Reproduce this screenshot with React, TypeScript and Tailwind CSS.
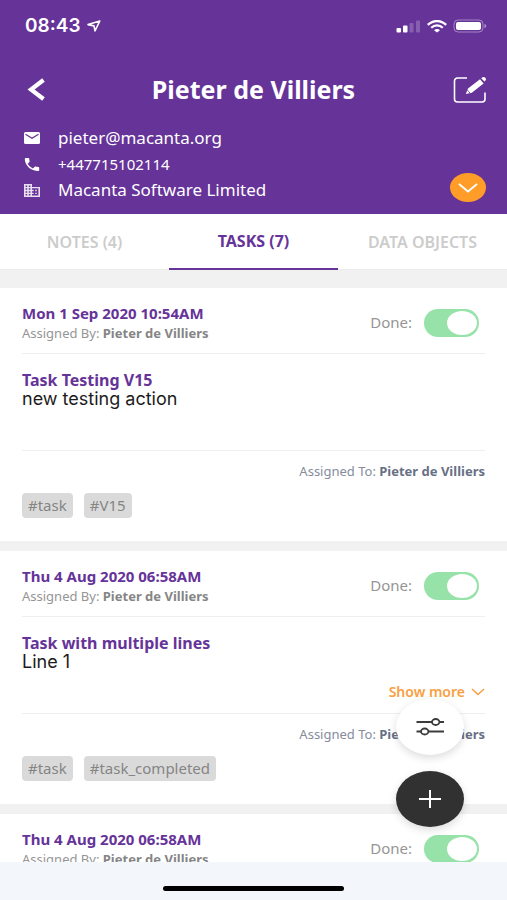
import { useState } from "react";

type Task = {
  id: number;
  date: string;
  title: string;
  body: string;
  tags: string[];
  more?: boolean;
};

const PERSON = "Pieter de Villiers";

const TASKS: Task[] = [
  { id: 1, date: "Mon 1 Sep 2020 10:54AM", title: "Task Testing V15", body: "new testing action", tags: ["#task", "#V15"] },
  { id: 2, date: "Thu 4 Aug 2020 06:58AM", title: "Task with multiple lines", body: "Line 1", tags: ["#task", "#task_completed"], more: true },
  { id: 3, date: "Thu 4 Aug 2020 06:58AM", title: "Task with multiple lines", body: "Line 1", tags: ["#task", "#task_completed"], more: true },
];

const TABS = ["NOTES (4)", "TASKS (7)", "DATA OBJECTS"];

function StatusBar() {
  return (
    <div className="flex h-13 items-center justify-between pr-5 pl-[25px]">
      <div className="flex items-center gap-1.5">
        <span className="font-['Inter',sans-serif] text-[19px] leading-6 font-semibold">08:43</span>
        <svg width="14" height="12" viewBox="0 0 14 12" fill="none" stroke="currentColor" strokeWidth="1.600" strokeLinejoin="round" aria-hidden="true">
          <path d="M12.800 1 1 4.600l6 1.300 1 5z" />
        </svg>
      </div>
      <div className="flex items-center gap-1.5">
        <svg width="25" height="14" viewBox="0 0 25 14" fill="currentColor" aria-hidden="true">
          <rect x="0.5" y="9" width="4.500" height="4.500" rx="1" />
          <rect x="7" y="6.500" width="4.500" height="7" rx="1" />
          <rect x="13.500" y="4" width="4" height="9.500" rx="1" opacity="0.22" />
          <rect x="20" y="1.500" width="4" height="12" rx="1" opacity="0.22" />
        </svg>
        <svg width="20" height="13" viewBox="0 0 20 13" fill="none" stroke="currentColor" strokeWidth="2.200" aria-hidden="true">
          <path d="M.8 4.900C6-.2 14-.2 19.200 4.900" />
          <path d="M4.200 7.800c3.400-3.200 8.200-3.200 11.600 0" />
          <path d="M7 10.200c1.800-1.500 4.200-1.500 6 0L10 12.600z" fill="currentColor" stroke="none" />
        </svg>
        <svg width="34" height="14" viewBox="0 0 34 14" aria-hidden="true">
          <rect x="1" y="1" width="29" height="12" rx="4" fill="none" stroke="#fff" strokeOpacity="0.4" />
          <rect x="3" y="3" width="25" height="8" rx="2" fill="#fff" />
          <path d="M31.500 5c2.200.5 2.200 3.500 0 4z" fill="#fff" opacity="0.5" />
        </svg>
      </div>
    </div>
  );
}

function Header() {
  return (
    <header className="relative shrink-0 bg-[#663399] pb-[11px] text-white">
      <StatusBar />
      <div className="flex h-[73px] items-center justify-between px-5">
        <button type="button" aria-label="Back" className="flex w-9 items-center pl-1.5">
          <svg width="20" height="24" viewBox="0 0 20 24" fill="none" stroke="currentColor" strokeWidth="4.200" aria-hidden="true">
            <path d="M17.500 3 5 12.500 17.500 22" />
          </svg>
        </button>
        <h1 className="text-[25px] leading-8 font-bold">{PERSON}</h1>
        <button type="button" aria-label="Edit contact" className="flex w-9 items-center justify-end">
          <svg width="34" height="28" viewBox="0 0 34 28" fill="none" aria-hidden="true">
            <path d="M14 3H4.500a3 3 0 0 0-3 3v18a3 3 0 0 0 3 3H29a3 3 0 0 0 3-3v-6.500" stroke="#fff" strokeWidth="1.600" />
            <path d="M15 13.600 27 4.300l3.600 4.200-11.800 9.200-6 1.400zM28.200 3.300l1-.8c1.200-.9 2.200-.8 3.100.2.900 1.100.9 2.200-.1 3.100l-.8.700z" fill="#fff" />
            <path d="m14.200 14.800 2.800 3.300" stroke="#663399" strokeWidth="0.800" />
          </svg>
        </button>
      </div>
      <address className="pl-6 text-[17px] leading-[26px] not-italic">
        <div className="flex items-center gap-4.5">
          <svg width="16" height="12" viewBox="0 0 16 12" fill="currentColor" aria-hidden="true">
            <path d="M1.500 0h13A1.500 1.500 0 0 1 16 1.500v9a1.500 1.500 0 0 1-1.500 1.500h-13A1.500 1.500 0 0 1 0 10.500v-9A1.500 1.500 0 0 1 1.500 0Z" />
            <path d="m1.500 2.200 6.500 4 6.500-4" fill="none" stroke="#663399" strokeWidth="1.300" />
          </svg>
          <a href="mailto:pieter@macanta.org">pieter@macanta.org</a>
        </div>
        <div className="flex items-center gap-4.5">
          <svg width="16" height="13" viewBox="2 3 20 18" preserveAspectRatio="none" fill="currentColor" aria-hidden="true">
            <path d="M6.620 10.790c1.440 2.830 3.760 5.140 6.590 6.590l2.200-2.200c.27-.27.67-.36 1.020-.24 1.120.37 2.330.57 3.570.57.550 0 1 .45 1 1V20c0 .55-.45 1-1 1-9.390 0-17-7.610-17-17 0-.55.45-1 1-1h3.500c.55 0 1 .45 1 1 0 1.250.2 2.450.57 3.570.11.350.03.740-.25 1.020z" />
          </svg>
          <a href="tel:+447715102114" className="text-[15px]">+447715102114</a>
        </div>
        <div className="flex items-center gap-4.5">
          <svg width="16" height="13" viewBox="2 3 20 18" preserveAspectRatio="none" fill="currentColor" opacity="0.85" aria-hidden="true">
            <path d="M12 7V3H2v18h20V7zM6 19H4v-2h2zm0-4H4v-2h2zm0-4H4V9h2zm0-4H4V5h2zm4 12H8v-2h2zm0-4H8v-2h2zm0-4H8V9h2zm0-4H8V5h2zm10 12h-8v-2h2v-2h-2v-2h2v-2h-2V9h8zm-2-8h-2v2h2zm0 4h-2v2h2z" />
          </svg>
          <span>Macanta Software Limited</span>
        </div>
      </address>
      <button type="button" aria-label="Show contact details" className="absolute right-[21px] bottom-3 flex h-[29px] w-9 items-center justify-center rounded-[50%] bg-[#ff9d28]">
        <svg width="20" height="10" viewBox="0 0 20 10" fill="none" stroke="currentColor" strokeWidth="1.800" aria-hidden="true">
          <path d="m1 1 9 7.500L19 1" />
        </svg>
      </button>
    </header>
  );
}

function TaskCard({ task }: { task: Task }) {
  const [done, setDone] = useState(true);
  return (
    <article className="bg-white px-[22px]">
      <div className="flex h-[66px] items-center justify-between border-b border-[#efeff1] pr-1.5">
        <div className="pt-1">
          <h2 className="text-[15px] leading-5 font-bold text-[#663399]">{task.date}</h2>
          <p className="text-[13px] leading-5 text-[#959595]">
            Assigned By: <b className="text-[#858585]">{PERSON}</b>
          </p>
        </div>
        <label className="flex items-center gap-3 pt-1 text-[15px] text-[#959595]">
          Done:
          <input
            type="checkbox"
            role="switch"
            checked={done}
            onChange={(event) => setDone(event.target.checked)}
            className="flex h-7 w-[55px] appearance-none items-center rounded-full bg-[#d5d5d5] p-0.5 before:h-6 before:w-[30px] before:rounded-[50%] before:bg-white checked:justify-end checked:bg-[#97e2a9]"
          />
        </label>
      </div>
      <div className="flex h-[97px] flex-col border-b border-[#efeff1] pt-[17px] pb-[11px]">
        <h3 className="text-base leading-[18px] font-bold text-[#663399]">{task.title}</h3>
        <p className="font-['Inter',sans-serif] text-lg leading-5 text-[#1c1c1c]">{task.body}</p>
        {task.more && (
          <button type="button" className="mt-auto flex items-center gap-1.5 self-end text-sm leading-5 font-semibold text-[#f9a044]">
            Show more
            <svg width="14" height="8" viewBox="0 0 14 8" fill="none" stroke="currentColor" strokeWidth="1.600" aria-hidden="true">
              <path d="m1 1 6 5.500L13 1" />
            </svg>
          </button>
        )}
      </div>
      <div className="pt-2.5 pb-[23px]">
        <p className="text-right text-[13px] leading-5 text-[#858c9c]">
          Assigned To: <b className="text-[#687086]">{PERSON}</b>
        </p>
        <ul className="mt-3 flex gap-[11px]">
          {task.tags.map((tag) => (
            <li key={tag} className="rounded bg-[#dadada] px-1.5 text-[15px] leading-[25px] text-[#858585]">{tag}</li>
          ))}
        </ul>
      </div>
    </article>
  );
}

export default function App() {
  const [active, setActive] = useState(1);
  return (
    <div className="relative flex h-screen flex-col overflow-hidden bg-[#f1f1f1] font-['Noto_Sans',sans-serif]">
      <Header />
      <nav className="grid h-14 shrink-0 grid-cols-3 bg-white">
        {TABS.map((tab, index) => (
          <button
            key={tab}
            type="button"
            onClick={() => setActive(index)}
            className={
              index === active
                ? "border-b-2 border-[#663399] text-base font-bold text-[#663399]"
                : "border-b border-[#ececec] text-base font-semibold text-[#cccccc]"
            }
          >
            {tab}
          </button>
        ))}
      </nav>
      <main className="flex min-h-0 flex-1 flex-col gap-2.5 overflow-hidden pt-4.5">
        {TASKS.map((task) => (
          <TaskCard key={task.id} task={task} />
        ))}
      </main>
      <div className="absolute right-[43px] bottom-[73px] flex flex-col gap-4">
        <button type="button" aria-label="Filter tasks" className="flex h-14 w-17 items-center justify-center rounded-[50%] bg-white shadow-[0_3px_8px_rgba(0,0,0,0.14)]">
          <svg width="28" height="18" viewBox="0 0 28 18" fill="none" stroke="#3c3c3c" strokeWidth="1.800" aria-hidden="true">
            <path d="M0.500 4h15.500M23.500 4H28M0.500 13.500H5M12.500 13.500H28" />
            <ellipse cx="19.700" cy="4" rx="3.700" ry="3" />
            <ellipse cx="8.700" cy="13.500" rx="3.700" ry="3" />
          </svg>
        </button>
        <button type="button" aria-label="Add task" className="flex h-14 w-17 items-center justify-center rounded-[50%] bg-[#313131] text-white shadow-[0_3px_8px_rgba(0,0,0,0.14)]">
          <svg width="22" height="18" viewBox="0 0 22 18" fill="none" stroke="currentColor" strokeWidth="2" aria-hidden="true">
            <path d="M0 9h22M11 0v18" />
          </svg>
        </button>
      </div>
      <footer className="flex h-[38px] shrink-0 items-center justify-center bg-[#f3f6fa] pt-3.5">
        <div className="h-[5px] w-[181px] rounded-full bg-black" />
      </footer>
    </div>
  );
}
